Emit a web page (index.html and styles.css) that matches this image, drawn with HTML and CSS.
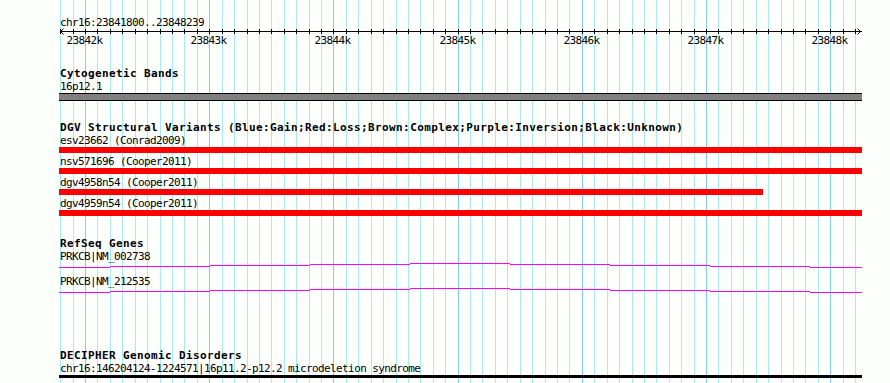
FILE: index.html
```html
<!DOCTYPE html>
<html lang="en">
<head>
<meta charset="utf-8">
<title>chr16:23841800..23848239</title>
<link rel="stylesheet" href="styles.css">
</head>
<body>
<div class="panel">
  <svg class="grid" width="890" height="383" viewBox="0 0 890 383" aria-hidden="true">
    <path class="grid-minor" d="M60.5 0V383M73.5 0V383M97.5 0V383M110.5 0V383M122.5 0V383M135.5 0V383M147.5 0V383M160.5 0V383M172.5 0V383M184.5 0V383M197.5 0V383M222.5 0V383M234.5 0V383M247.5 0V383M259.5 0V383M271.5 0V383M284.5 0V383M296.5 0V383M309.5 0V383M321.5 0V383M346.5 0V383M358.5 0V383M371.5 0V383M383.5 0V383M396.5 0V383M408.5 0V383M420.5 0V383M433.5 0V383M445.5 0V383M470.5 0V383M482.5 0V383M495.5 0V383M507.5 0V383M520.5 0V383M532.5 0V383M545.5 0V383M557.5 0V383M569.5 0V383M594.5 0V383M607.5 0V383M619.5 0V383M632.5 0V383M644.5 0V383M656.5 0V383M669.5 0V383M681.5 0V383M694.5 0V383M718.5 0V383M731.5 0V383M743.5 0V383M756.5 0V383M768.5 0V383M781.5 0V383M793.5 0V383M805.5 0V383M818.5 0V383M843.5 0V383M855.5 0V383"/>
    <path class="grid-major" d="M85.5 0V383M209.5 0V383M333.5 0V383M458.5 0V383M582.5 0V383M706.5 0V383M830.5 0V383"/>
  </svg>

  <div class="tracks">
    <section class="ruler">
      <div class="ruler-label">chr16:23841800..23848239</div>
      <svg class="axis" width="890" height="20" viewBox="0 0 890 20">
        <rect class="axis-line" x="60" y="2" width="802" height="1"/>
        <path class="axis-ticks" d="M60.5 0v5M73.5 0v5M85.5 0v5M97.5 0v5M110.5 0v5M122.5 0v5M135.5 0v5M147.5 0v5M160.5 0v5M172.5 0v5M184.5 0v5M197.5 0v5M209.5 0v5M222.5 0v5M234.5 0v5M247.5 0v5M259.5 0v5M271.5 0v5M284.5 0v5M296.5 0v5M309.5 0v5M321.5 0v5M333.5 0v5M346.5 0v5M358.5 0v5M371.5 0v5M383.5 0v5M396.5 0v5M408.5 0v5M420.5 0v5M433.5 0v5M445.5 0v5M458.5 0v5M470.5 0v5M482.5 0v5M495.5 0v5M507.5 0v5M520.5 0v5M532.5 0v5M545.5 0v5M557.5 0v5M569.5 0v5M582.5 0v5M594.5 0v5M607.5 0v5M619.5 0v5M632.5 0v5M644.5 0v5M656.5 0v5M669.5 0v5M681.5 0v5M694.5 0v5M706.5 0v5M718.5 0v5M731.5 0v5M743.5 0v5M756.5 0v5M768.5 0v5M781.5 0v5M793.5 0v5M805.5 0v5M818.5 0v5M830.5 0v5M843.5 0v5M855.5 0v5"/>
        <path class="axis-arrow" d="M63.5 -0.5L60.5 2.5L63.5 5.5M857.5 -0.5L860.5 2.5L857.5 5.5"/>
        <text class="axis-label" x="84.5" y="15">23842k</text>
        <text class="axis-label" x="208.5" y="15">23843k</text>
        <text class="axis-label" x="332.5" y="15">23844k</text>
        <text class="axis-label" x="457.5" y="15">23845k</text>
        <text class="axis-label" x="581.5" y="15">23846k</text>
        <text class="axis-label" x="705.5" y="15">23847k</text>
        <text class="axis-label" x="829.5" y="15">23848k</text>
      </svg>
    </section>

    <section class="track track-cyto">
      <h2 class="track-title">Cytogenetic Bands</h2>
      <div class="feat-label">16p12.1</div>
      <div class="band"></div>
    </section>

    <section class="track track-dgv">
      <h2 class="track-title">DGV Structural Variants (Blue:Gain;Red:Loss;Brown:Complex;Purple:Inversion;Black:Unknown)</h2>
      <div class="feat-row">
        <div class="feat-label">esv23662 (Conrad2009)</div>
        <div class="cnv loss"></div>
      </div>
      <div class="feat-row">
        <div class="feat-label">nsv571696 (Cooper2011)</div>
        <div class="cnv loss"></div>
      </div>
      <div class="feat-row">
        <div class="feat-label">dgv4958n54 (Cooper2011)</div>
        <div class="cnv loss" style="width:704px"></div>
      </div>
      <div class="feat-row">
        <div class="feat-label">dgv4959n54 (Cooper2011)</div>
        <div class="cnv loss"></div>
      </div>
    </section>

    <section class="track track-refseq">
      <h2 class="track-title">RefSeq Genes</h2>
      <div class="gene-row">
        <div class="feat-label">PRKCB|NM_002738</div>
        <svg class="gene" width="803" height="12" viewBox="0 0 803 12">
          <g class="gene-line">
            <rect x="0" y="4" width="51" height="1"/>
            <rect x="51" y="3" width="100" height="1"/>
            <rect x="151" y="2" width="100" height="1"/>
            <rect x="251" y="1" width="100" height="1"/>
            <rect x="351" y="0" width="100" height="1"/>
            <rect x="451" y="1" width="100" height="1"/>
            <rect x="551" y="2" width="100" height="1"/>
            <rect x="651" y="3" width="100" height="1"/>
            <rect x="751" y="4" width="52" height="1"/>
          </g>
        </svg>
      </div>
      <div class="gene-row">
        <div class="feat-label">PRKCB|NM_212535</div>
        <svg class="gene" width="803" height="12" viewBox="0 0 803 12">
          <g class="gene-line">
            <rect x="0" y="4" width="51" height="1"/>
            <rect x="51" y="3" width="100" height="1"/>
            <rect x="151" y="2" width="100" height="1"/>
            <rect x="251" y="1" width="100" height="1"/>
            <rect x="351" y="0" width="100" height="1"/>
            <rect x="451" y="1" width="100" height="1"/>
            <rect x="551" y="2" width="100" height="1"/>
            <rect x="651" y="3" width="100" height="1"/>
            <rect x="751" y="4" width="52" height="1"/>
          </g>
        </svg>
      </div>
    </section>

    <section class="track track-decipher">
      <h2 class="track-title">DECIPHER Genomic Disorders</h2>
      <div class="feat-label">chr16:146204124-1224571|16p11.2-p12.2 microdeletion syndrome</div>
      <div class="disorder"></div>
    </section>
  </div>
</div>
</body>
</html>
```

FILE: styles.css
```css
html, body {
  margin: 0;
  padding: 0;
  background: #fdfffd;
}

.panel {
  position: relative;
  width: 890px;
  height: 383px;
  overflow: hidden;
  font-family: "DejaVu Sans Mono", "Liberation Mono", monospace;
  color: #000;
}

.grid {
  position: absolute;
  left: 0;
  top: 0;
  display: block;
  shape-rendering: crispEdges;
}

.grid-minor {
  stroke: #a8eaf0;
  stroke-width: 1;
  fill: none;
}

.grid-major {
  stroke: #84cbef;
  stroke-width: 1;
  fill: none;
}

.tracks {
  position: relative;
  display: flex;
  flex-direction: column;
  align-items: flex-start;
  padding: 16px 0 0 59px;
}

.track {
  display: flex;
  flex-direction: column;
  align-items: flex-start;
}

/* ruler */
.ruler-label {
  margin-left: 1px;
  height: 13px;
  font-size: 11px;
  line-height: 13px;
  letter-spacing: -0.62px;
  white-space: nowrap;
}

.axis {
  display: block;
  margin-left: -59px;
  width: 890px;
  height: 20px;
  overflow: visible;
}

.axis-line {
  fill: #000;
  shape-rendering: crispEdges;
}

.axis-ticks {
  stroke: #000;
  stroke-width: 1;
  fill: none;
  shape-rendering: crispEdges;
}

.axis-arrow {
  stroke: #000;
  stroke-width: 1;
  fill: none;
}

.axis-label {
  font-family: "DejaVu Sans Mono", "Liberation Mono", monospace;
  font-size: 11px;
  letter-spacing: -0.62px;
  text-anchor: middle;
  fill: #000;
}

/* tracks */
.track-title {
  margin: 0 0 0 1px;
  height: 13px;
  font-size: 11px;
  font-weight: bold;
  line-height: 13px;
  letter-spacing: 0.38px;
  white-space: nowrap;
}

.feat-label {
  margin-left: 1px;
  height: 13px;
  font-size: 11px;
  line-height: 13px;
  letter-spacing: -0.62px;
  white-space: nowrap;
}

.track-cyto {
  margin-top: 18px;
}

.band {
  width: 803px;
  height: 6px;
  background: #808080;
  border-top: 1px solid #000;
  border-bottom: 1px solid #000;
}

.track-dgv {
  margin-top: 20px;
}

.feat-row {
  margin-bottom: 2px;
}

.cnv {
  width: 803px;
  height: 6px;
}

.cnv.loss {
  background: #ff0000;
}

.track-refseq {
  margin-top: 19px;
}

.gene {
  display: block;
  width: 803px;
  height: 12px;
  shape-rendering: crispEdges;
}

.gene-line rect {
  fill: #ff00ff;
}

.track-decipher {
  margin-top: 49px;
}

.disorder {
  width: 803px;
  height: 3px;
  background: #000;
}
```
